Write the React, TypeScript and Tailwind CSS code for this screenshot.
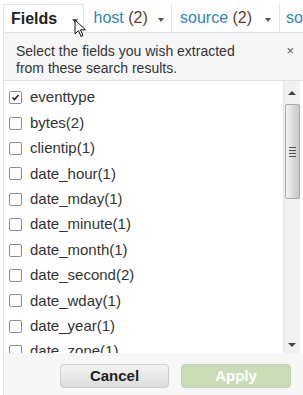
const fields = [
    { name: "eventtype", checked: true },
    { name: "bytes(2)" },
    { name: "clientip(1)" },
    { name: "date_hour(1)" },
    { name: "date_mday(1)" },
    { name: "date_minute(1)" },
    { name: "date_month(1)" },
    { name: "date_second(2)" },
    { name: "date_wday(1)" },
    { name: "date_year(1)" },
    { name: "date_zone(1)" },
];

function Caret() {
    return <span className="inline-block w-0 h-0 border-l-[3px] border-r-[3px] border-t-[4px] border-l-transparent border-r-transparent border-t-[#555]" />;
}

function Box({ checked }: { checked?: boolean }) {
    return (
        <span className="w-[13px] h-[13px] border border-[#8c8c8c] rounded-[2px] bg-white flex items-center justify-center shrink-0">
            {checked && (
                <svg width="9" height="9" viewBox="0 0 9 9">
                    <path d="M1.5 4.5 L3.5 6.5 L7.5 2" stroke="#222" strokeWidth="1.6" fill="none" />
                </svg>
            )}
        </span>
    );
}

export default function App() {
    return (
        <div className="w-[303px] h-[395px] bg-white overflow-hidden relative" style={{ fontFamily: "Arial, 'Liberation Sans', sans-serif" }}>
            {/* tab strip */}
            <div className="flex h-[32px] items-end text-[16px]">
                <div className="ml-[3px] w-[82px] h-[28px] border border-b-0 border-[#e3e3e3] bg-white flex items-center pl-[7px] pr-[5px]">
                    <span className="font-bold text-[#222]">Fields</span>
                    <span className="ml-auto mb-[2px]"><Caret /></span>
                </div>
                <div className="w-[90px] h-[28px] flex items-center pl-[10px] pr-[7px] border-r border-[#e3e3e3]">
                    <span className="text-[#2f86b8]">host <span className="text-[#5a3d2b]">(2)</span></span>
                    <span className="ml-auto mb-[2px]"><Caret /></span>
                </div>
                <div className="w-[110px] h-[28px] flex items-center pl-[8px] pr-[8px] border-r border-[#e3e3e3]">
                    <span className="text-[#2f86b8]">source <span className="text-[#5a3d2b]">(2)</span></span>
                    <span className="ml-auto mb-[2px]"><Caret /></span>
                </div>
                <div className="h-[28px] flex items-center pl-[6px] text-[#2f86b8]">so</div>
            </div>

            {/* cursor */}
            <svg className="absolute left-[74px] top-[19px]" width="14" height="20" viewBox="0 0 14 20">
                <path d="M1 1 L1 15 L4.5 11.5 L7 17.5 L9 16.5 L6.5 10.8 L11.5 10.8 Z" fill="white" stroke="#111" strokeWidth="1" />
            </svg>

            {/* panel */}
            <div className="ml-[3px] w-[300px] h-[363px] bg-[#f7f7f7] border-t border-l border-[#e3e3e3] flex flex-col">
                <div className="h-[47px] relative px-[12px] pt-[10px] text-[14px] leading-[17px] text-[#333]">
                    Select the fields you wish extracted
                    <br />
                    from these search results.
                    <span className="absolute right-[9px] top-[9px] text-[13px] text-[#555]">×</span>
                </div>
                <div className="h-[273px] flex bg-white border-t border-[#e3e3e3]">
                    <div className="flex-1 overflow-hidden pt-[4px] pl-[5px]">
                        {fields.map((f) => (
                            <div key={f.name} className="h-[25.4px] shrink-0 flex items-center gap-[8px] text-[15px] text-[#333]">
                                <Box checked={f.checked} />
                                <span>{f.name}</span>
                            </div>
                        ))}
                    </div>
                    <div className="w-[17px] mr-[3px] bg-[#f1f1f1] border-l border-[#e6e6e6] flex flex-col items-center">
                        <div className="h-[23px] flex items-center justify-center">
                            <span className="inline-block w-0 h-0 border-l-[4px] border-r-[4px] border-b-[4px] border-l-transparent border-r-transparent border-b-[#444]" />
                        </div>
                        <div className="w-[15px] h-[95px] rounded-[2px] border border-[#a8a8a8] bg-gradient-to-r from-[#f4f4f4] via-[#dcdcdc] to-[#c8c8c8] flex flex-col items-center justify-center gap-[2px]">
                            <span className="w-[7px] h-[1px] bg-[#555]" />
                            <span className="w-[7px] h-[1px] bg-[#555]" />
                            <span className="w-[7px] h-[1px] bg-[#555]" />
                            <span className="w-[7px] h-[1px] bg-[#555]" />
                        </div>
                        <div className="flex-1" />
                        <div className="h-[16px] flex items-center justify-center">
                            <span className="inline-block w-0 h-0 border-l-[4px] border-r-[4px] border-t-[4px] border-l-transparent border-r-transparent border-t-[#444]" />
                        </div>
                    </div>
                </div>
                <div className="flex-1 flex items-start pt-[11px] pl-[56px] gap-[12px]">
                    <button className="w-[109px] h-[24px] rounded-[4px] border border-[#cfcfcf] bg-gradient-to-b from-[#f3f3f3] to-[#dcdcdc] text-[15px] font-bold text-[#222]">
                        Cancel
                    </button>
                    <button className="w-[110px] h-[24px] rounded-[4px] border border-[#c5d6b4] bg-[#cbdcb9] text-[15px] font-bold text-white">
                        Apply
                    </button>
                </div>
            </div>
        </div>
    );
}
